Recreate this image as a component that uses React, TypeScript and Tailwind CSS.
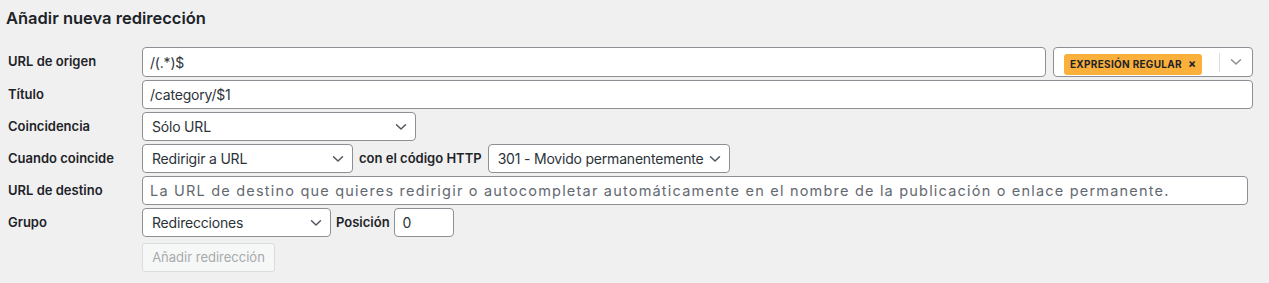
import React from "react";

const Chevron = ({ className = "" }: { className?: string }) => (
  <svg width="12" height="8" viewBox="0 0 12 8" className={className} fill="none">
    <path d="M1.5 1.8 L6 6 L10.5 1.8" stroke="currentColor" strokeWidth="1.5" strokeLinecap="round" strokeLinejoin="round" />
  </svg>
);

const Label = ({ children }: { children: React.ReactNode }) => (
  <div className="w-[142px] shrink-0 pl-[8px] text-[13px] font-semibold text-[#1d2327]">{children}</div>
);

const Select = ({ value, w }: { value: string; w: string }) => (
  <div
    className={`${w} h-full flex items-center justify-between rounded-[4px] border border-[#8c8f94] bg-white pl-[9px] pr-[8px] text-[14px] tracking-[-0.2px] text-[#2c3338] shrink-0`}
  >
    <span className="whitespace-nowrap">{value}</span>
    <Chevron className="text-[#50575e] shrink-0 ml-[4px]" />
  </div>
);

export default function App() {
  return (
    <div
      className="w-[1269px] h-[283px] bg-[#f0f0f1] text-[#1d2327]"
      style={{ fontFamily: "Inter, 'Noto Sans', sans-serif" }}
    >
      <h2 className="pl-[6px] pt-[7px] text-[16.5px] font-semibold leading-[22px] text-[#1d2327]">
        Añadir nueva redirección
      </h2>
      <div className="mt-[18px] flex flex-col">
        {/* URL de origen */}
        <div className="flex items-center h-[30px]">
          <Label>URL de origen</Label>
          <div className="flex w-[1111px] h-full gap-[7px]">
            <div className="flex-1 h-full flex items-center rounded-[4px] border border-[#8c8f94] bg-white pl-[7px] text-[14px] tracking-[-0.2px] text-[#2c3338]">
              /(.*)$
            </div>
            <div className="w-[200px] h-full flex items-center rounded-[4px] border border-[#8c8f94] bg-white">
              <div className="flex-1 pl-[10px]">
                <span className="inline-flex items-center h-[21px] rounded-[3px] bg-[#fbb03b] pl-[6px] pr-[6px] text-[10px] font-bold tracking-[0.3px] text-[#1d2327]">
                  EXPRESIÓN REGULAR
                  <span className="ml-[6px] text-[12px] font-bold leading-none">×</span>
                </span>
              </div>
              <div className="w-px h-[19px] bg-[#dcdcde]" />
              <div className="w-[32px] flex items-center justify-center">
                <Chevron className="text-[#8c8f94]" />
              </div>
            </div>
          </div>
        </div>

        {/* Título */}
        <div className="flex items-center h-[29px] mt-[3px]">
          <Label>Título</Label>
          <div className="w-[1111px] h-full flex items-center rounded-[4px] border border-[#8c8f94] bg-white pl-[7px] text-[14px] tracking-[-0.2px] text-[#2c3338]">
            /category/$1
          </div>
        </div>

        {/* Coincidencia */}
        <div className="flex items-center h-[29px] mt-[3px]">
          <Label>Coincidencia</Label>
          <Select value="Sólo URL" w="w-[274px]" />
        </div>

        {/* Cuando coincide */}
        <div className="flex items-center h-[29px] mt-[3px]">
          <Label>Cuando coincide</Label>
          <Select value="Redirigir a URL" w="w-[211px]" />
          <span className="mx-[6px] text-[13px] font-semibold whitespace-nowrap">con el código HTTP</span>
          <Select value="301 - Movido permanentemente" w="w-[242px]" />
        </div>

        {/* URL de destino */}
        <div className="flex items-center h-[29px] mt-[3px]">
          <Label>URL de destino</Label>
          <div className="w-[1106px] h-full flex items-center rounded-[4px] border border-[#8c8f94] bg-white pl-[7px] text-[14.5px] tracking-[1.2px] text-[#646970] whitespace-nowrap overflow-hidden">
            La URL de destino que quieres redirigir o autocompletar automáticamente en el nombre de la publicación o enlace permanente.
          </div>
        </div>

        {/* Grupo */}
        <div className="flex items-center h-[29px] mt-[3px]">
          <Label>Grupo</Label>
          <Select value="Redirecciones" w="w-[189px]" />
          <span className="ml-[5px] mr-[4px] text-[13px] font-semibold">Posición</span>
          <div className="w-[60px] h-full flex items-center rounded-[4px] border border-[#8c8f94] bg-white pl-[8px] text-[14px] text-[#2c3338]">
            0
          </div>
        </div>

        {/* Button */}
        <div className="flex items-center h-[29px] mt-[6px]">
          <div className="w-[142px] shrink-0" />
          <div className="w-[133px] h-full flex items-center justify-center rounded-[3px] border border-[#dcdcde] bg-[#f6f7f7] text-[13px] text-[#a7aaad]">
            Añadir redirección
          </div>
        </div>
      </div>
    </div>
  );
}
